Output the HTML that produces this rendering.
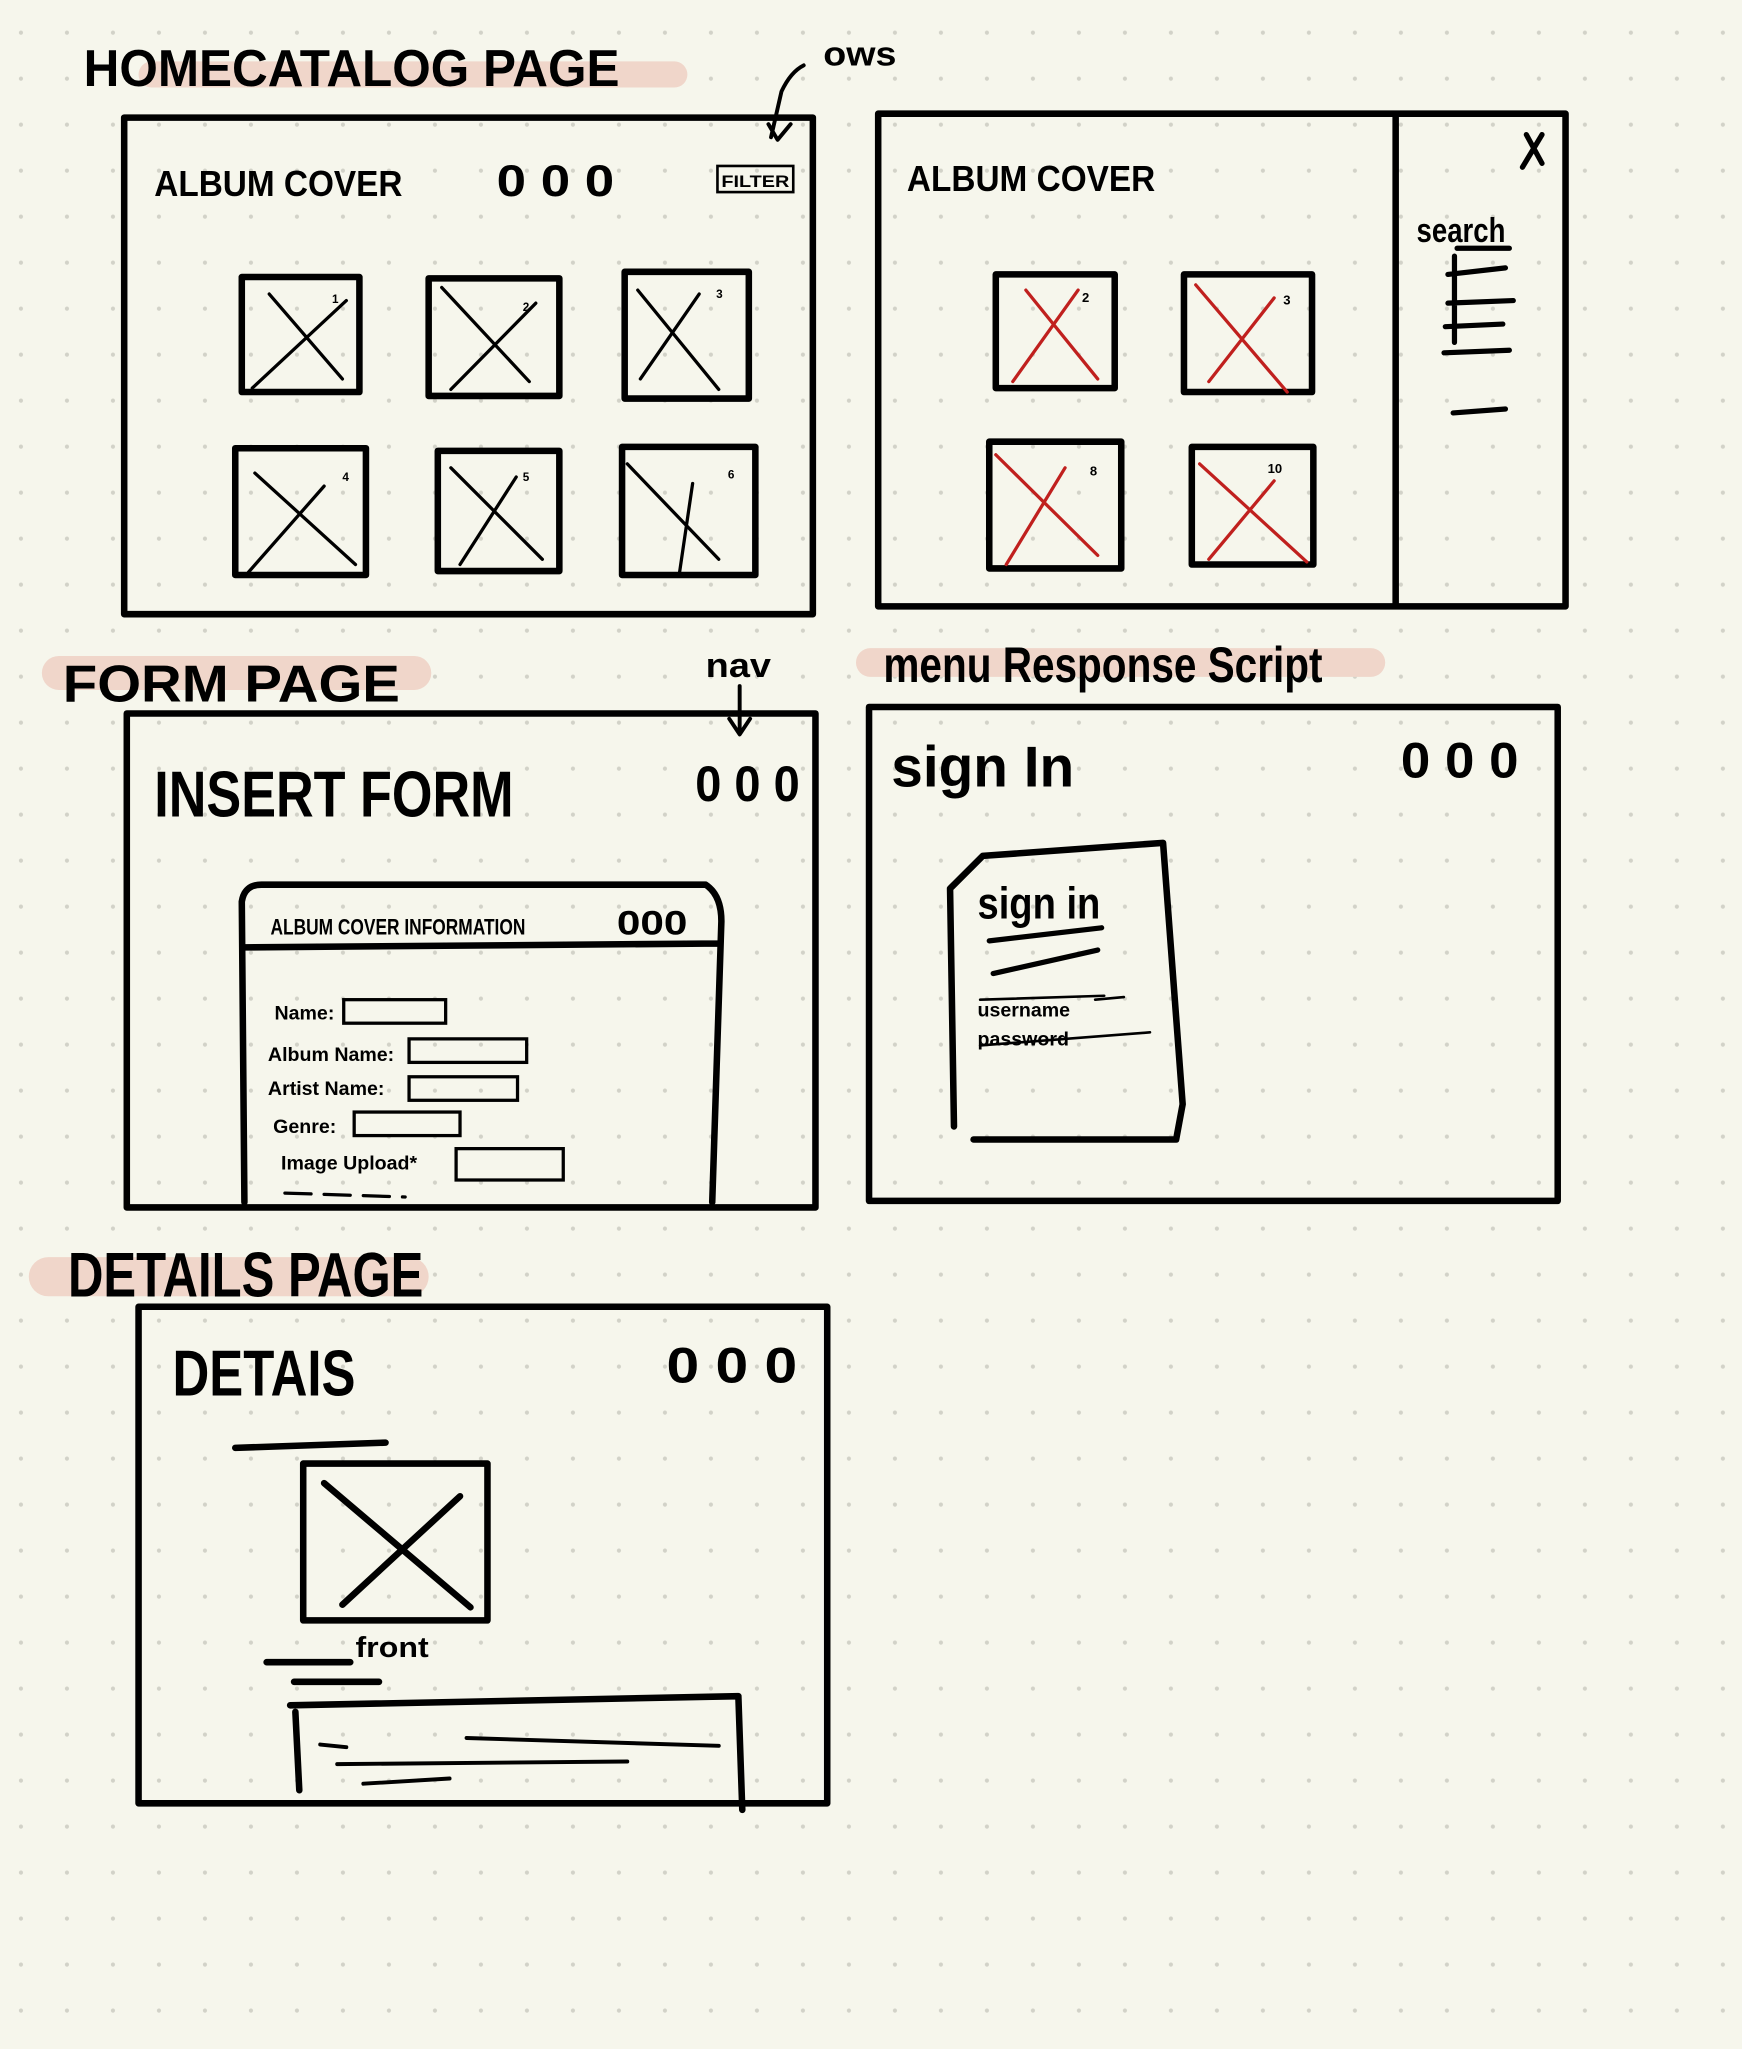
<!DOCTYPE html>
<html><head><meta charset="utf-8"><style>
html,body{margin:0;padding:0;background:#f6f6ec;}
svg{display:block}
text{font-family:"Liberation Sans",sans-serif;font-weight:bold;fill:#000}
</style></head><body>
<svg width="1742" height="2049" viewBox="0 0 1333 1568" xmlns="http://www.w3.org/2000/svg">
<defs><pattern id="d" x="-1.6" y="7.4" width="35.2" height="35.2" patternUnits="userSpaceOnUse"><circle cx="17.6" cy="17.6" r="1.6" fill="#d2d2c8"/></pattern></defs>
<rect width="1333" height="1568" fill="#f6f6ec"/>
<rect width="1333" height="1568" fill="url(#d)"/>
<g fill="#f0d6ca">
<rect x="106" y="47" width="420" height="20" rx="10"/>
<rect x="32" y="502" width="298" height="26" rx="13"/>
<rect x="655" y="496" width="405" height="22" rx="11"/>
<rect x="22" y="962" width="306" height="30" rx="15"/>
</g>
<g stroke="#000" fill="none" stroke-width="5" stroke-linecap="round" stroke-linejoin="round">
<rect x="95" y="90" width="527" height="380"/>
<rect x="672" y="87" width="526" height="377"/>
<line x1="1068" y1="90" x2="1068" y2="462"/>
<rect x="97" y="546" width="527" height="378"/>
<rect x="665" y="541" width="527" height="378"/>
<rect x="106" y="1000" width="527" height="380"/>
<!-- home boxes -->
<rect x="185" y="212" width="90" height="88"/><rect x="328" y="213" width="100" height="90"/><rect x="478" y="208" width="95" height="97"/>
<rect x="180" y="343" width="100" height="97"/><rect x="335" y="345" width="93" height="92"/><rect x="476" y="342" width="102" height="98"/>
<!-- right boxes -->
<rect x="762" y="210" width="91" height="87"/><rect x="906" y="210" width="98" height="90"/>
<rect x="757" y="338" width="101" height="97"/><rect x="912" y="342" width="93" height="90"/>
<!-- details -->
<rect x="232" y="1120" width="141" height="120"/>
<path d="M248 1135 L360 1230 M352 1145 L262 1228"/>
<path d="M180 1108 L295 1104 M204 1272 L268 1272 M225 1287 L290 1287"/>
<path d="M222 1305 L565 1298 L568 1385 M226 1310 L229 1370"/>
<path d="M727 680 L752 655 L890 645 L905 845 L900 872 L745 872 M727 680 L730 862"/>
<path d="M757 720 L843 710 M760 745 L840 727" stroke-width="4"/>
<!-- form inner window -->
<path d="M187 920 L185 690 Q187 677 200 677 L540 677 Q552 685 552 705 L545 920 M187 725 L550 722"/>
<path d="M1115 190 L1155 190 M1108 210 L1152 205 M1108 232 L1158 230 M1106 250 L1150 248 M1105 270 L1155 268 M1112 316 L1152 313 M1113 196 L1113 262" stroke-width="4"/>
<path d="M1168 103 L1180 125 M1180 103 L1165 128" stroke-width="4"/>
<path d="M590 105 L598 70 Q605 55 615 50 M588 95 L595 107 L605 95" stroke-width="3"/>
<path d="M566 525 L566 560 M558 550 L566 562 L574 550" stroke-width="3"/>
</g>
<g stroke="#000" fill="none" stroke-width="2.5" stroke-linecap="round">
<path d="M193 297 L265 230 M206 225 L262 290"/><path d="M345 298 L410 232 M338 220 L405 292"/><path d="M490 290 L535 225 M488 222 L550 298"/>
<path d="M190 438 L248 372 M195 362 L272 432"/><path d="M352 432 L395 365 M345 358 L415 428"/><path d="M520 438 L530 370 M480 355 L550 428"/>
<rect x="263" y="765" width="78" height="18"/><rect x="313" y="795" width="90" height="18"/><rect x="313" y="824" width="83" height="18"/><rect x="271" y="851" width="81" height="18"/><rect x="349" y="879" width="82" height="24"/>
<path d="M218 913 L310 916" stroke-dasharray="20 10"/>
<path d="M750 765 L845 762 M838 765 L860 763 M750 800 L880 790" stroke-width="2"/>
<path d="M245 1335 L265 1337 M357 1330 L550 1336 M258 1350 L480 1348 M278 1365 L344 1361" stroke-width="3"/>
<rect x="549" y="127" width="58" height="20" stroke-width="2"/>
</g>
<g stroke="#c0201e" fill="none" stroke-width="2.5" stroke-linecap="round">
<path d="M775 292 L825 222 M785 222 L840 290"/><path d="M925 292 L975 228 M915 218 L985 300"/>
<path d="M770 432 L815 358 M762 348 L840 425"/><path d="M925 428 L975 368 M918 355 L1000 430"/>
</g>
<g fill="#c0201e" font-family="Liberation Sans" font-size="10"><text x="828" y="231">2</text><text x="982" y="233">3</text><text x="834" y="364">8</text><text x="970" y="362">10</text></g>
<g font-size="9"><text x="254" y="232">1</text><text x="400" y="238">2</text><text x="548" y="228">3</text><text x="262" y="368">4</text><text x="400" y="368">5</text><text x="557" y="366">6</text></g>
<text x="64" y="66" font-size="40" textLength="410" lengthAdjust="spacingAndGlyphs">HOMECATALOG PAGE</text>
<text x="118" y="150" font-size="28" textLength="190" lengthAdjust="spacingAndGlyphs">ALBUM COVER</text>
<text x="380" y="150" font-size="34" textLength="90" lengthAdjust="spacingAndGlyphs">0 0 0</text>
<text x="552" y="143" font-size="13" textLength="52" lengthAdjust="spacingAndGlyphs">FILTER</text>
<text x="630" y="50" font-size="26" font-weight="normal" textLength="56" lengthAdjust="spacingAndGlyphs">ows</text>
<text x="694" y="146" font-size="28" textLength="190" lengthAdjust="spacingAndGlyphs">ALBUM COVER</text>
<text x="1084" y="185" font-size="26" font-weight="normal" textLength="68" lengthAdjust="spacingAndGlyphs">search</text>
<text x="48" y="537" font-size="40" textLength="258" lengthAdjust="spacingAndGlyphs">FORM PAGE</text>
<text x="540" y="518" font-size="26" font-weight="normal" textLength="50" lengthAdjust="spacingAndGlyphs">nav</text>
<text x="118" y="625" font-size="50" textLength="275" lengthAdjust="spacingAndGlyphs">INSERT FORM</text>
<text x="532" y="613" font-size="38" textLength="80" lengthAdjust="spacingAndGlyphs">0 0 0</text>
<text x="207" y="715" font-size="17" textLength="195" lengthAdjust="spacingAndGlyphs">ALBUM COVER INFORMATION</text>
<text x="472" y="715" font-size="26" textLength="54" lengthAdjust="spacingAndGlyphs">000</text>
<g font-size="15" font-weight="normal">
<text x="210" y="780">Name:</text><text x="205" y="812">Album Name:</text><text x="205" y="838">Artist Name:</text><text x="209" y="867">Genre:</text><text x="215" y="895">Image Upload*</text>
</g>
<text x="676" y="522" font-size="38" textLength="336" lengthAdjust="spacingAndGlyphs">menu Response Script</text>
<text x="682" y="602" font-size="44" font-weight="normal" textLength="140" lengthAdjust="spacingAndGlyphs">sign In</text>
<text x="1072" y="595" font-size="38" textLength="90" lengthAdjust="spacingAndGlyphs">0 0 0</text>
<text x="748" y="703" font-size="34" textLength="94" lengthAdjust="spacingAndGlyphs">sign in</text>
<text x="748" y="778" font-size="15" font-weight="normal">username</text>
<text x="748" y="800" font-size="15" font-weight="normal">password</text>
<text x="52" y="992" font-size="48" textLength="272" lengthAdjust="spacingAndGlyphs">DETAILS PAGE</text>
<text x="132" y="1068" font-size="50" textLength="140" lengthAdjust="spacingAndGlyphs">DETAIS</text>
<text x="510" y="1058" font-size="38" textLength="100" lengthAdjust="spacingAndGlyphs">0 0 0</text>
<text x="272" y="1268" font-size="22" font-weight="normal" textLength="56" lengthAdjust="spacingAndGlyphs">front</text>
</svg>
</body></html>
